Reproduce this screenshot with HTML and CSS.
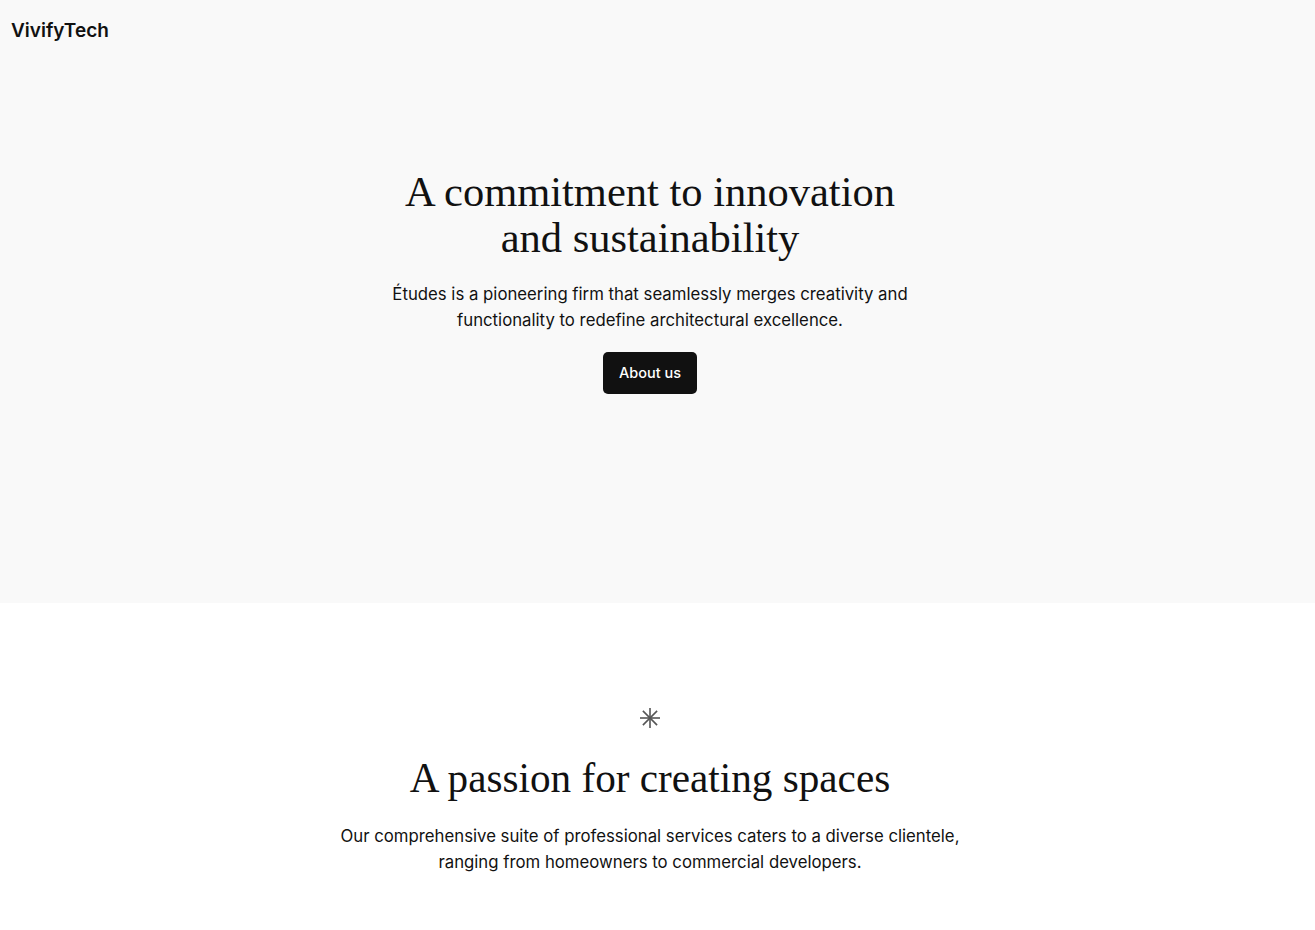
FILE: index.html
```html
<!DOCTYPE html>
<html lang="en">
<head>
<meta charset="utf-8">
<title>VivifyTech</title>
<link rel="stylesheet" href="styles.css">
</head>
<body>
<section class="hero">
  <header class="site-header">
    <a class="site-title" href="#">VivifyTech</a>
  </header>
  <div class="hero-content">
    <h1 class="hero-title">A commitment to innovation<br>and sustainability</h1>
    <p class="hero-text">Études is a pioneering firm that seamlessly merges creativity and functionality to redefine architectural excellence.</p>
    <a class="btn" href="#">About us</a>
  </div>
</section>
<section class="services">
  <svg class="asterisk" width="22" height="22" viewBox="0 0 22 22" aria-hidden="true">
    <g stroke="#555" stroke-width="1.6" stroke-linecap="butt">
      <line x1="11" y1="1" x2="11" y2="21"/>
      <line x1="1" y1="11" x2="21" y2="11"/>
      <line x1="3.9" y1="3.9" x2="18.1" y2="18.1"/>
      <line x1="18.1" y1="3.9" x2="3.9" y2="18.1"/>
    </g>
  </svg>
  <h2 class="section-title">A passion for creating spaces</h2>
  <p class="section-text">Our comprehensive suite of professional services caters to a diverse clientele,<br>ranging from homeowners to commercial developers.</p>
</section>
</body>
</html>
```
FILE: styles.css
```css
* { box-sizing: border-box; }
html, body { margin: 0; padding: 0; }
body {
  background: #ffffff;
  color: #111111;
  font-family: Inter, "Liberation Sans", sans-serif;
  font-size: 16.75px;
  line-height: 26px;
}
.hero {
  background: #f9f9f9;
  height: 603px;
  display: flex;
  flex-direction: column;
}
.site-header {
  padding: 18px 11px 0;
  height: 60px;
}
.site-title {
  font-size: 19px;
  font-weight: 600;
  line-height: 22px;
  color: #111;
  text-decoration: none;
}
.hero-content {
  display: flex;
  flex-direction: column;
  align-items: center;
  text-align: center;
  padding: 109px 15px 0 0;
}
.hero-title {
  margin: 0;
  font-family: "Liberation Serif", "DejaVu Serif", serif;
  font-weight: 400;
  font-size: 42.5px;
  line-height: 46px;
}
.hero-text {
  margin: 20px 0 0;
  max-width: 560px;
}
.btn {
  margin-top: 19px;
  display: inline-block;
  background: #111;
  color: #fff;
  font-size: 14.5px;
  font-weight: 500;
  line-height: 20px;
  padding: 11px 16px;
  border-radius: 5px;
  text-decoration: none;
}
.services {
  display: flex;
  flex-direction: column;
  align-items: center;
  text-align: center;
  padding: 104px 15px 0 0;
}
.asterisk { display: block; }
.section-title {
  margin: 26px 0 0;
  font-family: "Liberation Serif", "DejaVu Serif", serif;
  font-weight: 400;
  font-size: 41.2px;
  line-height: 46px;
}
.section-text {
  margin: 22px 0 0;
}
```
